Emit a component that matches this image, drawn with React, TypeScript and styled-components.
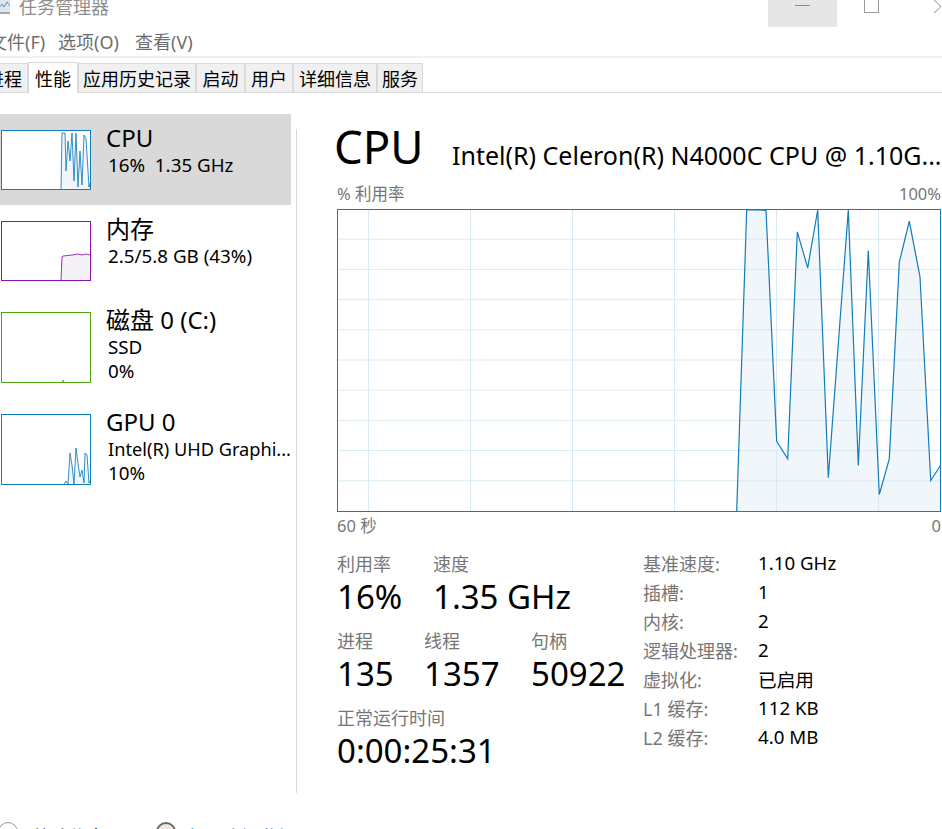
import React from 'react';
import styled, { createGlobalStyle } from 'styled-components';

const GlobalStyle = createGlobalStyle`
  html, body {
    margin: 0;
    padding: 0;
    background: #fff;
    overflow: hidden;
  }
  body {
    font-family: "Noto Sans", "Noto Sans CJK SC", sans-serif;
    color: #000;
  }
`;

const tabs = ['进程', '性能', '应用历史记录', '启动', '用户', '详细信息', '服务'];
const tabWidths = [28, 50, 118, 49, 48, 84, 46];

const cpuPoints: [number, number][] = [
  [399.7, 302], [409.7, 1], [419, 1], [429, 1.3], [439.7, 232.2], [450.7, 249.8], [460.3, 22.8],
  [470.7, 58.8], [480.7, 1], [491.3, 268.8], [511.3, 1], [521.3, 256.5], [531.3, 41.5],
  [542.3, 285.5], [552.3, 249.8], [562.3, 53.2], [572.3, 12.2], [583, 67.8], [593.7, 271.5], [603.5, 256.5],
];

const specs = [
  ['基准速度:', '1.10 GHz'],
  ['插槽:', '1'],
  ['内核:', '2'],
  ['逻辑处理器:', '2'],
  ['虚拟化:', '已启用'],
  ['L1 缓存:', '112 KB'],
  ['L2 缓存:', '4.0 MB'],
];

const toPath = (pts: [number, number][]) => pts.map(([x, y]) => `${x},${y}`).join(' ');

const CpuGraph = () => {
  const hLines = Array.from({ length: 9 }, (_, i) => 30.2 * (i + 1));
  const vLines = [31.5, 133.5, 235.5, 337.5, 439.5, 541.5];
  const last = cpuPoints[cpuPoints.length - 1];
  return (
    <GraphBox>
      <svg width="604" height="303" viewBox="0 0 604 303">
        <polygon points={`${toPath(cpuPoints)} ${last[0]},302`} fill="#f1f6fa" />
        {hLines.map((y) => (
          <line key={y} x1="0" x2="604" y1={y} y2={y} stroke="#d9eaf4" strokeWidth="1" />
        ))}
        {vLines.map((x) => (
          <line key={x} x1={x} x2={x} y1="0" y2="303" stroke="#d9eaf4" strokeWidth="1" />
        ))}
        <polyline points={toPath(cpuPoints)} fill="none" stroke="#117dbb" strokeWidth="1.2" />
      </svg>
    </GraphBox>
  );
};

const Spark = ({ h, line, fill, pts }: { h: number; line: string; fill: string; pts: [number, number][] }) => {
  const base = h - 2;
  const closing = `${pts[pts.length - 1][0]},${base}`;
  return (
    <Thumb $color={line} $h={h}>
      <svg width="88" height={base} viewBox={`0 0 88 ${base}`}>
        <polygon points={`${toPath(pts)} ${closing}`} fill={fill} />
        <polyline points={toPath(pts)} fill="none" stroke={line} strokeWidth="1" strokeOpacity="0.85" />
      </svg>
    </Thumb>
  );
};

const App = () => (
  <Page>
    <GlobalStyle />
    <TitleBar>
      <TitleIcon width="12" height="14" viewBox="0 0 12 14">
        <rect x="0" y="0" width="11" height="12" fill="#dfe6ec" />
        <polyline points="0,8 3,4 5,7 8,2 11,6" fill="none" stroke="#5b95c4" strokeWidth="1" />
        <rect x="0" y="12" width="11" height="2" fill="#a8a8a8" />
      </TitleIcon>
      <TitleText>任务管理器</TitleText>
      <WindowButtons>
        <MinButton>
          <MinDash />
        </MinButton>
        <MaxButton>
          <MaxBox />
        </MaxButton>
        <CloseButton>
          <svg width="8" height="14" viewBox="0 0 8 14">
            <polyline points="0,0 7,6.5 0,13" fill="none" stroke="#8c8c8c" strokeWidth="1" />
          </svg>
        </CloseButton>
      </WindowButtons>
    </TitleBar>

    <MenuBar>
      <MenuItem $w={69} $shift={-11}>文件(F)</MenuItem>
      <MenuItem $w={77}>选项(O)</MenuItem>
      <MenuItem $w={80}>查看(V)</MenuItem>
    </MenuBar>

    <TabStrip>
      {tabs.map((t, i) => (
        <Tab key={t} $active={i === 1} $w={tabWidths[i]} $clip={i === 0}>
          {t}
        </Tab>
      ))}
    </TabStrip>

    <Main>
      <Sidebar>
        <SideRow $active>
          <Spark
            h={60}
            line="#117dbb"
            fill="#f1f6fa"
            pts={[[59, 58], [60, 2], [63, 2], [64, 40], [66, 10], [68, 30], [70, 2], [72, 50], [74, 2], [76, 56], [78, 20], [80, 54], [82, 4], [84, 8], [87, 56], [88, 52]]}
          />
          <SideText>
            <SideTitle>CPU</SideTitle>
            <SideSub>16%&nbsp; 1.35 GHz</SideSub>
          </SideText>
        </SideRow>
        <SideRow>
          <Spark
            h={60}
            line="#8b12ae"
            fill="#f4f2f4"
            pts={[[59, 58], [60, 35], [61, 34], [70, 33], [76, 32], [80, 33], [84, 32], [88, 33]]}
          />
          <SideText>
            <SideTitle>内存</SideTitle>
            <SideSub>2.5/5.8 GB (43%)</SideSub>
          </SideText>
        </SideRow>
        <SideRow>
          <Spark h={71} line="#4da60c" fill="#e8f3df" pts={[[60, 69], [61, 67], [62, 69]]} />
          <SideText>
            <SideTitle>磁盘 0 (C:)</SideTitle>
            <SideSub>SSD</SideSub>
            <SideSub>0%</SideSub>
          </SideText>
        </SideRow>
        <SideRow>
          <Spark
            h={71}
            line="#117dbb"
            fill="#f1f6fa"
            pts={[[62, 69], [64, 66], [66, 69], [68, 38], [70, 50], [72, 69], [74, 33], [76, 48], [78, 62], [80, 55], [82, 68], [83, 38], [85, 40], [87, 68], [88, 66]]}
          />
          <SideText>
            <SideTitle>GPU 0</SideTitle>
            <SideSub $size={18.2}>Intel(R) UHD Graphi...</SideSub>
            <SideSub>10%</SideSub>
          </SideText>
        </SideRow>
      </Sidebar>

      <Divider />

      <Detail>
        <Heading>
          <BigName>CPU</BigName>
          <Model>Intel(R) Celeron(R) N4000C CPU @ 1.10G...</Model>
        </Heading>
        <AxisRow>
          <span>% 利用率</span>
          <span>100%</span>
        </AxisRow>
        <CpuGraph />
        <TimeRow>
          <span>60 秒</span>
          <span>0</span>
        </TimeRow>

        <Stats>
          <LeftStats>
            <StatRow>
              <Stat $w={96}>
                <StatLabel>利用率</StatLabel>
                <StatValue>16%</StatValue>
              </Stat>
              <Stat>
                <StatLabel>速度</StatLabel>
                <StatValue>1.35 GHz</StatValue>
              </Stat>
            </StatRow>
            <StatRow>
              <Stat $w={87}>
                <StatLabel>进程</StatLabel>
                <StatValue>135</StatValue>
              </Stat>
              <Stat $w={107}>
                <StatLabel>线程</StatLabel>
                <StatValue>1357</StatValue>
              </Stat>
              <Stat>
                <StatLabel>句柄</StatLabel>
                <StatValue>50922</StatValue>
              </Stat>
            </StatRow>
            <StatRow>
              <Stat>
                <StatLabel>正常运行时间</StatLabel>
                <StatValue>0:00:25:31</StatValue>
              </Stat>
            </StatRow>
          </LeftStats>
          <SpecGrid>
            {specs.map(([k, v]) => (
              <React.Fragment key={k}>
                <SpecKey>{k}</SpecKey>
                <SpecValue>{v}</SpecValue>
              </React.Fragment>
            ))}
          </SpecGrid>
        </Stats>
      </Detail>
    </Main>

    <Footer>
      <FooterIcon width="22" height="22" viewBox="0 0 22 22" $shift={-2}>
        <circle cx="10" cy="11" r="9.5" fill="#fff" stroke="#9a9a9a" />
      </FooterIcon>
      <FooterText>简略信息(D)</FooterText>
      <FooterIcon width="22" height="22" viewBox="0 0 22 22" $shift={12}>
        <circle cx="11" cy="11" r="9" fill="#f3e4e0" stroke="#5f6b70" strokeWidth="2" />
      </FooterIcon>
      <FooterLink>打开资源监视器</FooterLink>
    </Footer>
  </Page>
);

const Page = styled.div`
  width: 942px;
  height: 829px;
  overflow: hidden;
  display: flex;
  flex-direction: column;
  background: #fff;
`;

const TitleBar = styled.div`
  height: 27px;
  flex-shrink: 0;
  display: flex;
  align-items: flex-start;
  overflow: hidden;
`;

const TitleIcon = styled.svg`
  flex-shrink: 0;
  margin-left: -1px;
`;

const TitleText = styled.div`
  margin-left: 8px;
  margin-top: -5px;
  font-size: 18px;
  line-height: 24px;
  color: #8e8e8e;
`;

const WindowButtons = styled.div`
  margin-left: auto;
  display: flex;
  height: 27px;
`;

const MinButton = styled.div`
  width: 69px;
  height: 27px;
  background: #e6e6e6;
  display: flex;
  justify-content: center;
`;

const MinDash = styled.div`
  width: 15px;
  height: 1px;
  margin-top: 5px;
  background: #8a8a8a;
`;

const MaxButton = styled.div`
  width: 69px;
  margin-right: 1px;
  display: flex;
  justify-content: center;
`;

const MaxBox = styled.div`
  width: 13px;
  height: 12px;
  border: 1px solid #9a9a9a;
  border-top: none;
`;

const CloseButton = styled.div`
  width: 35px;
  display: flex;
  justify-content: flex-end;
  align-items: flex-start;
`;

const MenuBar = styled.div`
  height: 29px;
  flex-shrink: 0;
  display: flex;
  align-items: center;
  border-bottom: 2px solid #f0f0f0;
  overflow: hidden;
  box-sizing: content-box;
`;

const MenuItem = styled.div<{ $w: number; $shift?: number }>`
  flex: 0 0 ${({ $w }) => $w}px;
  margin-left: ${({ $shift }) => $shift ?? 0}px;
  font-size: 18px;
  line-height: 24px;
  color: #6d6d6d;
  white-space: nowrap;
`;

const TabStrip = styled.div`
  height: 34px;
  flex-shrink: 0;
  display: flex;
  align-items: flex-end;
  border-bottom: 1px solid #d9d9d9;
  box-sizing: content-box;
`;

const Tab = styled.div<{ $active: boolean; $w: number; $clip: boolean }>`
  width: ${({ $w }) => $w}px;
  height: ${({ $active }) => ($active ? 31 : 29)}px;
  box-sizing: border-box;
  margin-bottom: ${({ $active }) => ($active ? -1 : 0)}px;
  flex-shrink: 0;
  display: flex;
  align-items: center;
  justify-content: ${({ $clip }) => ($clip ? 'flex-end' : 'center')};
  padding-right: ${({ $clip }) => ($clip ? 5 : 0)}px;
  background: ${({ $active }) => ($active ? '#fff' : '#f0f0f0')};
  border: 1px solid #d9d9d9;
  border-left-width: ${({ $clip }) => ($clip ? 0 : 1)}px;
  border-bottom-width: 0;
  font-size: 18px;
  color: #000;
  white-space: nowrap;
  overflow: hidden;
  position: relative;
  z-index: ${({ $active }) => ($active ? 1 : 0)};
`;

const Main = styled.div`
  flex: 1;
  min-height: 0;
  display: flex;
  padding-top: 21px;
`;

const Sidebar = styled.div`
  width: 291px;
  flex-shrink: 0;
  display: flex;
  flex-direction: column;
`;

const SideRow = styled.div<{ $active?: boolean }>`
  display: flex;
  align-items: flex-start;
  gap: 15px;
  padding: 16px 0 15px 1px;
  background: ${({ $active }) => ($active ? '#d9d9d9' : 'transparent')};
`;

const Thumb = styled.div<{ $color: string; $h: number }>`
  width: 90px;
  height: ${({ $h }) => $h}px;
  box-sizing: border-box;
  flex-shrink: 0;
  background: #fff;
  border: 1px solid ${({ $color }) => $color};
  svg {
    display: block;
  }
`;

const SideText = styled.div`
  margin-top: -7px;
  min-width: 0;
  white-space: nowrap;
`;

const SideTitle = styled.div`
  font-size: 24px;
  line-height: 30px;
`;

const SideSub = styled.div<{ $size?: number }>`
  margin-left: 2px;
  font-size: ${({ $size }) => $size ?? 18.8}px;
  line-height: 24px;
`;

const Divider = styled.div`
  width: 1px;
  height: 664px;
  margin-top: 15px;
  margin-left: 5px;
  flex-shrink: 0;
  background: #d9d9d9;
`;

const Detail = styled.div`
  width: 604px;
  margin-left: 40px;
  flex-shrink: 0;
`;

const Heading = styled.div`
  display: flex;
  align-items: center;
  height: 70px;
  margin-left: -3px;
  white-space: nowrap;
`;

const BigName = styled.div`
  font-size: 45.5px;
  line-height: 70px;
  width: 118px;
  margin-top: -6px;
  flex-shrink: 0;
`;

const Model = styled.div`
  font-size: 25px;
  line-height: 32px;
  margin-top: 11px;
`;

const AxisRow = styled.div`
  display: flex;
  justify-content: space-between;
  height: 25px;
  font-size: 16.5px;
  line-height: 20px;
  color: #767676;
`;

const GraphBox = styled.div`
  width: 604px;
  height: 303px;
  outline: 1px solid #117dbb;
  outline-offset: -1px;
  background: #fff;
  svg {
    display: block;
  }
`;

const TimeRow = styled.div`
  display: flex;
  justify-content: space-between;
  height: 23px;
  padding-top: 4px;
  font-size: 16.5px;
  line-height: 20px;
  color: #767676;
`;

const Stats = styled.div`
  display: flex;
  margin-top: 13px;
`;

const LeftStats = styled.div`
  width: 306px;
  flex-shrink: 0;
  display: flex;
  flex-direction: column;
  gap: 11px;
`;

const StatRow = styled.div`
  display: flex;
`;

const Stat = styled.div<{ $w?: number }>`
  flex: 0 0 ${({ $w }) => ($w ? `${$w}px` : 'auto')};
`;

const StatLabel = styled.div`
  font-size: 18px;
  line-height: 24px;
  color: #767676;
`;

const StatValue = styled.div`
  font-size: 33px;
  line-height: 42px;
  white-space: nowrap;
`;

const SpecGrid = styled.div`
  display: grid;
  grid-template-columns: 115px auto;
  grid-auto-rows: 29px;
  align-items: center;
  margin-top: -4px;
`;

const SpecKey = styled.div`
  font-size: 18px;
  color: #767676;
  white-space: nowrap;
`;

const SpecValue = styled.div`
  font-size: 18.7px;
  white-space: nowrap;
`;

const Footer = styled.div`
  height: 36px;
  box-sizing: border-box;
  flex-shrink: 0;
  display: flex;
  align-items: flex-start;
  padding-top: 28px;
`;

const FooterIcon = styled.svg<{ $shift: number }>`
  flex-shrink: 0;
  margin-left: ${({ $shift }) => $shift}px;
`;

const FooterText = styled.div`
  margin-left: 13px;
  margin-top: 4px;
  width: 110px;
  font-size: 18px;
  line-height: 24px;
  white-space: nowrap;
`;

const FooterLink = styled.div`
  margin-left: 11px;
  margin-top: 4px;
  font-size: 18px;
  line-height: 24px;
  color: #0066cc;
  white-space: nowrap;
`;

export default App;
